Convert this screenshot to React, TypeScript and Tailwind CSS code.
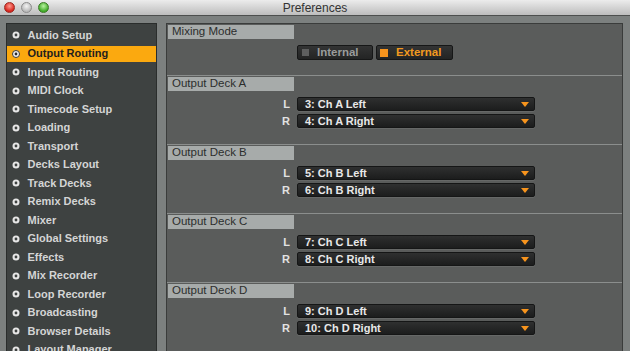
import React from 'react';

const menu = [
	'Audio Setup',
	'Output Routing',
	'Input Routing',
	'MIDI Clock',
	'Timecode Setup',
	'Loading',
	'Transport',
	'Decks Layout',
	'Track Decks',
	'Remix Decks',
	'Mixer',
	'Global Settings',
	'Effects',
	'Mix Recorder',
	'Loop Recorder',
	'Broadcasting',
	'Browser Details',
	'Layout Manager',
];

const decks = [
	{ name: 'A', l: '3: Ch A Left', r: '4: Ch A Right' },
	{ name: 'B', l: '5: Ch B Left', r: '6: Ch B Right' },
	{ name: 'C', l: '7: Ch C Left', r: '8: Ch C Right' },
	{ name: 'D', l: '9: Ch D Left', r: '10: Ch D Right' },
];

function Bullet({ active }: { active: boolean }) {
	return (
		<svg width="8" height="8" viewBox="0 0 8 8" className="shrink-0">
			<circle cx="4" cy="4" r="3.5" fill={active ? '#f4f4f4' : '#e6e6e6'} stroke={active ? '#3a3a3a' : 'none'} strokeWidth="1" />
			<circle cx="4" cy="4" r="1.4" fill={active ? '#2a2a2a' : '#3e4241'} />
		</svg>
	);
}

function Dropdown({ label, value }: { label: string; value: string }) {
	return (
		<div className="flex items-center h-[14px]">
			<div className="w-[30px] ml-[100px] pr-[7px] text-right text-[11px] font-bold text-[#e2e2e2]">{label}</div>
			<div className="w-[238px] h-[14px] flex items-center justify-between pl-[7px] pr-[5px] rounded-[2px] border border-[#151616] bg-gradient-to-b from-[#2f3030] to-[#1c1d1d] shadow-[0_1px_0_rgba(255,255,255,0.08)]">
				<span className="text-[11px] font-bold text-[#e8e8e8] leading-none">{value}</span>
				<svg width="8" height="5" viewBox="0 0 8 5">
					<path d="M0 0 H8 L4 5 Z" fill="#f7941d" />
				</svg>
			</div>
		</div>
	);
}

function Header({ title }: { title: string }) {
	return (
		<div className="ml-[1px] w-[126px] h-[14px] bg-[#a7abaa] flex items-center pl-[4px] text-[11.5px] text-[#2c2e2d] leading-none">{title}</div>
	);
}

export default function App() {
	return (
		<div className="w-[630px] h-[351px] overflow-hidden flex flex-col bg-[#7c807f]" style={{ fontFamily: '"Liberation Sans", Arial, sans-serif' }}>
			{/* Title bar */}
			<div className="relative h-[16px] shrink-0 bg-gradient-to-b from-[#ececec] to-[#bdbdbd] border-b border-[#4d4f4e] flex items-center justify-center">
				<div className="absolute left-[4px] top-[2px] flex gap-[6px]">
					<div className="w-[11px] h-[11px] rounded-full bg-[radial-gradient(circle_at_50%_35%,#ff9b8f,#d7221a_70%)] border border-[#9b2a22]" />
					<div className="w-[11px] h-[11px] rounded-full bg-[radial-gradient(circle_at_50%_35%,#f4f4f4,#b9b9b9_70%)] border border-[#8c8c8c]" />
					<div className="w-[11px] h-[11px] rounded-full bg-[radial-gradient(circle_at_50%_35%,#b9f2a0,#3eaa25_70%)] border border-[#3b7a27]" />
				</div>
				<span className="text-[12px] text-[#333] leading-none">Preferences</span>
			</div>

			<div className="flex-1 flex pt-[7px] pl-[6px] pr-[7px] gap-[9px] min-h-0">
				{/* Sidebar */}
				<div className="w-[151px] shrink-0 bg-[#3e4241] border border-b-0 border-[#2a2d2c] pt-[3px] flex flex-col gap-[2.5px] overflow-hidden">
					{menu.map((item, i) => {
						const active = i === 1;
						return (
							<div key={item} className={`h-[16px] shrink-0 flex items-center pl-[4.5px] gap-[8px] ${active ? 'bg-[#fba90f]' : ''}`}>
								<Bullet active={active} />
								<span className={`text-[11px] font-bold leading-none ${active ? 'text-[#1e1e1e]' : 'text-[#d4d5d5]'}`}>{item}</span>
							</div>
						);
					})}
				</div>

				{/* Settings panel */}
				<div className="flex-1 bg-[#5a5c5b] border border-b-0 border-[#3a3c3b] overflow-hidden flex flex-col">
					<div className="pt-[1px] pb-[15px]">
						<Header title="Mixing Mode" />
						<div className="mt-[6px] ml-[130px] flex gap-[3px]">
							<div className="w-[76px] h-[15px] flex items-center pl-[4px] gap-[8px] rounded-[2px] border border-[#161717] bg-gradient-to-b from-[#333434] to-[#232424]">
								<div className="w-[7px] h-[7px] bg-[#5e5f5f]" />
								<span className="text-[11.5px] font-bold text-[#9a9c9b] leading-none">Internal</span>
							</div>
							<div className="w-[77px] h-[15px] flex items-center pl-[3px] gap-[8px] rounded-[2px] border border-[#161717] bg-gradient-to-b from-[#333434] to-[#232424]">
								<div className="w-[8px] h-[8px] bg-[#f7941d]" />
								<span className="text-[11.5px] font-bold text-[#f29a1f] leading-none">External</span>
							</div>
						</div>
					</div>

					{decks.map((d) => (
						<div key={d.name} className="border-t border-[#8b8e8d] pt-[1px] pb-[16px] shrink-0">
							<Header title={`Output Deck ${d.name}`} />
							<div className="mt-[6px] flex flex-col gap-[3px]">
								<Dropdown label="L" value={d.l} />
								<Dropdown label="R" value={d.r} />
							</div>
						</div>
					))}
				</div>
			</div>
		</div>
	);
}
